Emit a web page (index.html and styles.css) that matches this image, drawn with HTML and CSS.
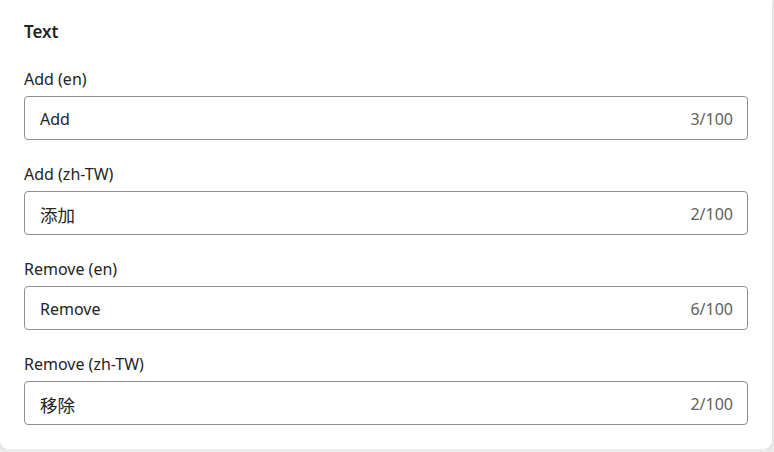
FILE: index.html
```html
<!DOCTYPE html>
<html lang="en">
<head>
    <meta charset="UTF-8">
    <meta name="viewport" content="width=device-width, initial-scale=1.0">
    <title>Text</title>
    <link rel="stylesheet" href="styles.css">
</head>
<body>
    <div class="card">
        <h2 class="card-title">Text</h2>

        <div class="field">
            <label class="field-label" for="addEn">Add (en)</label>
            <div class="input-box">
                <input id="addEn" type="text" value="Add" maxlength="100">
                <span class="counter">3/100</span>
            </div>
        </div>

        <div class="field">
            <label class="field-label" for="addTw">Add (zh-TW)</label>
            <div class="input-box">
                <input id="addTw" class="input-cjk" type="text" value="添加" maxlength="100" lang="zh-TW">
                <span class="counter">2/100</span>
            </div>
        </div>

        <div class="field">
            <label class="field-label" for="removeEn">Remove (en)</label>
            <div class="input-box">
                <input id="removeEn" type="text" value="Remove" maxlength="100">
                <span class="counter">6/100</span>
            </div>
        </div>

        <div class="field">
            <label class="field-label" for="removeTw">Remove (zh-TW)</label>
            <div class="input-box">
                <input id="removeTw" class="input-cjk" type="text" value="移除" maxlength="100" lang="zh-TW">
                <span class="counter">2/100</span>
            </div>
        </div>
    </div>
</body>
</html>
```

FILE: styles.css
```css
* {
    margin: 0;
    padding: 0;
    box-sizing: border-box;
    font-family: 'Noto Sans', 'Noto Sans CJK TC', sans-serif;
}

body {
    background-color: #ececec;
    color: #242424;
}

.card {
    width: 772px;
    background: white;
    border-radius: 0 0 8px 8px;
    box-shadow: 0 1px 3px rgba(0, 0, 0, 0.12);
    padding: 20px 24px 24px;
    display: flex;
    flex-direction: column;
    gap: 23px;
}

.card-title {
    font-size: 17px;
    font-weight: 600;
    line-height: 21px;
    padding-top: 1px;
    margin-bottom: 3px;
}

.field {
    display: flex;
    flex-direction: column;
    gap: 6px;
}

.field-label {
    font-size: 16px;
    line-height: 21px;
    padding-top: 1px;
}

.input-box {
    display: flex;
    align-items: center;
    height: 44px;
    padding: 2px 14px 0 15px;
    border: 1px solid #8f8f8f;
    border-radius: 4px;
    background: white;
}

.input-box input {
    flex: 1;
    border: none;
    outline: none;
    background: transparent;
    font-size: 16px;
    color: #242424;
}

.input-box .input-cjk {
    font-size: 17.5px;
}

.counter {
    font-size: 16px;
    color: #616161;
}
```
